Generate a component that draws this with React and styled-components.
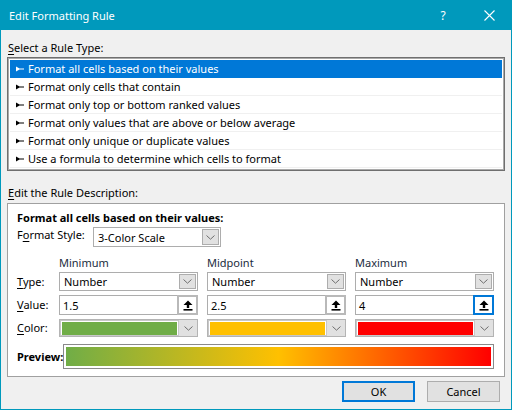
import React from "react";
import styled, { createGlobalStyle } from "styled-components";

const GlobalStyle = createGlobalStyle`
  html, body {
    margin: 0;
    padding: 0;
    background: #f0f0f0;
  }
  * {
    box-sizing: border-box;
  }
`;

const Window = styled.div`
  width: 512px;
  height: 410px;
  display: flex;
  flex-direction: column;
  background: #f0f0f0;
  border: 1px solid #0099bc;
  border-top: none;
  font-family: "Segoe UI", "Noto Sans", "Liberation Sans", sans-serif;
  font-size: 11px;
  color: #000;
  u {
    text-decoration: underline;
    text-underline-offset: 2px;
  }
`;

const TitleBar = styled.div`
  height: 30px;
  margin: 0 -1px;
  background: #0099bc;
  color: #fff;
  display: flex;
  align-items: center;
  padding-left: 9px;
  .title {
    flex: 1;
    font-size: 11px;
  }
`;

const TitleButton = styled.div`
  width: ${(p) => p.w}px;
  height: 30px;
  display: flex;
  align-items: center;
  justify-content: center;
  font-size: 12px;
`;

const Body = styled.div`
  flex: 1;
  display: flex;
  flex-direction: column;
  padding: 10px 6px 0;
`;

const SectionLabel = styled.div`
  height: 16px;
  line-height: 16px;
  padding-left: 1px;
  margin-top: ${(p) => p.mt || 0}px;
  margin-bottom: ${(p) => p.mb || 0}px;
`;

const ListBox = styled.div`
  height: 114px;
  background: #fff;
  border: 1px solid #6f6f6f;
  box-shadow: inset 0 0 0 1px #a9a9a9;
  padding: 2px;
  display: flex;
  flex-direction: column;
`;

const ListRow = styled.div`
  height: 18px;
  display: flex;
  align-items: center;
  padding-left: 6px;
  gap: 4px;
  background: ${(p) => (p.selected ? "#0078d7" : "#fff")};
  color: ${(p) => (p.selected ? "#fff" : "#000")};
  border-bottom: 1px solid ${(p) => (p.selected ? "#0078d7" : "#f0f0f0")};
  white-space: nowrap;
`;

const Panel = styled.div`
  background: #fff;
  border: 1px solid #a0a0a0;
  padding: 6px 10px 7px 9px;
  display: flex;
  flex-direction: column;
`;

const PanelHeading = styled.div`
  font-weight: bold;
  height: 16px;
  line-height: 16px;
  margin-bottom: 1px;
`;

const StyleRow = styled.div`
  display: flex;
  align-items: flex-start;
  .label {
    width: 76px;
    line-height: 16px;
  }
`;

const Combo = styled.div`
  width: ${(p) => p.w}px;
  height: ${(p) => p.h}px;
  border: 1px solid #adadad;
  background: #fff;
  display: flex;
  align-items: center;
  padding: 1px;
  .text {
    flex: 1;
    padding-left: 3px;
    white-space: nowrap;
  }
`;

const DropButton = styled.div`
  width: 17px;
  height: 100%;
  background: #e1e1e1;
  border: 1px solid #adadad;
  display: flex;
  align-items: center;
  justify-content: center;
`;

const Headers = styled.div`
  display: grid;
  grid-template-columns: 33px 139px 139px 139px;
  column-gap: 9px;
  margin-top: 8px;
  height: 16px;
  line-height: 16px;
  color: #1a2b3c;
  div:first-child {
    grid-column: 2;
  }
`;

const Grid = styled.div`
  display: grid;
  grid-template-columns: 33px 139px 139px 139px;
  grid-template-rows: 19px 20px 18px;
  column-gap: 9px;
  row-gap: 4px;
  margin-top: 1px;
  align-items: center;
`;

const RowLabel = styled.div`
  line-height: 16px;
`;

const ValueBox = styled.div`
  height: 20px;
  border: 1px solid #adadad;
  background: #fff;
  display: flex;
  align-items: center;
  .text {
    flex: 1;
    padding-left: 3px;
  }
`;

const UpButton = styled.div`
  width: 21px;
  height: 20px;
  margin: -1px -1px -1px 0;
  background: #fff;
  border: 2px solid ${(p) => (p.focused ? "#0078d7" : "#b9b9b9")};
  display: flex;
  align-items: center;
  justify-content: center;
`;

const ColorCombo = styled.div`
  height: 18px;
  border: 1px solid #b4b4b4;
  box-shadow: inset 0 0 0 1px #c8c8c8;
  background: #fff;
  display: flex;
  padding: 2px 0 1px 2px;
  gap: 1px;
`;

const Swatch = styled.div`
  flex: 1;
  background: ${(p) => p.color};
`;

const ColorDrop = styled.div`
  width: 19px;
  margin: -2px 0 -1px;
  background: #e1e1e1;
  border-left: 1px solid #c8c8c8;
  display: flex;
  align-items: center;
  justify-content: center;
`;

const PreviewRow = styled.div`
  display: flex;
  align-items: center;
  justify-content: space-between;
  margin-top: 7px;
  .label {
    font-weight: bold;
    white-space: nowrap;
  }
`;

const PreviewBox = styled.div`
  width: 431px;
  height: 25px;
  border: 1px solid #8a8a8a;
  padding: 2px;
  background: #fff;
  div {
    height: 100%;
    background: linear-gradient(to right, #70ad47 0%, #ffc000 50%, #ff0000 100%);
  }
`;

const Footer = styled.div`
  display: flex;
  justify-content: flex-end;
  gap: 12px;
  padding-right: 5px;
  margin-top: 4px;
`;

const Button = styled.div`
  width: 73px;
  height: 21px;
  display: flex;
  align-items: center;
  justify-content: center;
  background: #e1e1e1;
  border: ${(p) => (p.primary ? "2px solid #0078d7" : "1px solid #adadad")};
`;

const Bullet = ({ color }) => (
  <svg width="8" height="6" viewBox="0 0 8 6">
    <polygon points="0,0.5 3.5,2.4 8,2.4 8,3.6 3.5,3.6 0,5.5" fill={color} />
  </svg>
);

const Chevron = () => (
  <svg width="9" height="5" viewBox="0 0 9 5">
    <polyline points="0.5,0.5 4.5,4.2 8.5,0.5" fill="none" stroke="#6e6e6e" strokeWidth="1" />
  </svg>
);

const UpIcon = () => (
  <svg width="10" height="11" viewBox="0 0 10 11">
    <polygon points="5,0.5 9.5,5 6.2,5 6.2,8 3.8,8 3.8,5 0.5,5" fill="#000" />
    <rect x="0.5" y="9" width="9" height="1.6" fill="#000" />
  </svg>
);

const CloseIcon = () => (
  <svg width="11" height="11" viewBox="0 0 11 11">
    <path d="M0.5 0.5 L10.5 10.5 M10.5 0.5 L0.5 10.5" stroke="#fff" strokeWidth="1.1" />
  </svg>
);

const App = () => {
  const ruleTypes = [
    "Format all cells based on their values",
    "Format only cells that contain",
    "Format only top or bottom ranked values",
    "Format only values that are above or below average",
    "Format only unique or duplicate values",
    "Use a formula to determine which cells to format"
  ];
  const columns = [
    { name: "Minimum", value: "1.5", color: "#70ad47" },
    { name: "Midpoint", value: "2.5", color: "#ffc000" },
    { name: "Maximum", value: "4", color: "#ff0000", focused: true }
  ];
  return (
    <>
      <GlobalStyle />
      <Window>
        <TitleBar>
          <div className="title">Edit Formatting Rule</div>
          <TitleButton w={46}>?</TitleButton>
          <TitleButton w={46}>
            <CloseIcon />
          </TitleButton>
        </TitleBar>
        <Body>
          <SectionLabel mb={1}>
            <u>S</u>elect a Rule Type:
          </SectionLabel>
          <ListBox>
            {ruleTypes.map((rule, i) => (
              <ListRow key={rule} selected={i === 0}>
                <Bullet color={i === 0 ? "#fff" : "#000"} />
                {rule}
              </ListRow>
            ))}
          </ListBox>
          <SectionLabel mt={14} mb={2}>
            <u>E</u>dit the Rule Description:
          </SectionLabel>
          <Panel>
            <PanelHeading>Format all cells based on their values:</PanelHeading>
            <StyleRow>
              <div className="label">
                F<u>o</u>rmat Style:
              </div>
              <Combo w={128} h={20}>
                <div className="text">3-Color Scale</div>
                <DropButton>
                  <Chevron />
                </DropButton>
              </Combo>
            </StyleRow>
            <Headers>
              {columns.map((col) => (
                <div key={col.name}>{col.name}</div>
              ))}
            </Headers>
            <Grid>
              <RowLabel>
                <u>T</u>ype:
              </RowLabel>
              {columns.map((col) => (
                <Combo key={col.name + "t"} w={139} h={19}>
                  <div className="text">Number</div>
                  <DropButton>
                    <Chevron />
                  </DropButton>
                </Combo>
              ))}
              <RowLabel>
                <u>V</u>alue:
              </RowLabel>
              {columns.map((col) => (
                <ValueBox key={col.name + "v"}>
                  <div className="text">{col.value}</div>
                  <UpButton focused={col.focused}>
                    <UpIcon />
                  </UpButton>
                </ValueBox>
              ))}
              <RowLabel>
                <u>C</u>olor:
              </RowLabel>
              {columns.map((col) => (
                <ColorCombo key={col.name + "c"}>
                  <Swatch color={col.color} />
                  <ColorDrop>
                    <Chevron />
                  </ColorDrop>
                </ColorCombo>
              ))}
            </Grid>
            <PreviewRow>
              <div className="label">Preview:</div>
              <PreviewBox>
                <div />
              </PreviewBox>
            </PreviewRow>
          </Panel>
          <Footer>
            <Button primary>OK</Button>
            <Button>Cancel</Button>
          </Footer>
        </Body>
      </Window>
    </>
  );
};

export default App;
